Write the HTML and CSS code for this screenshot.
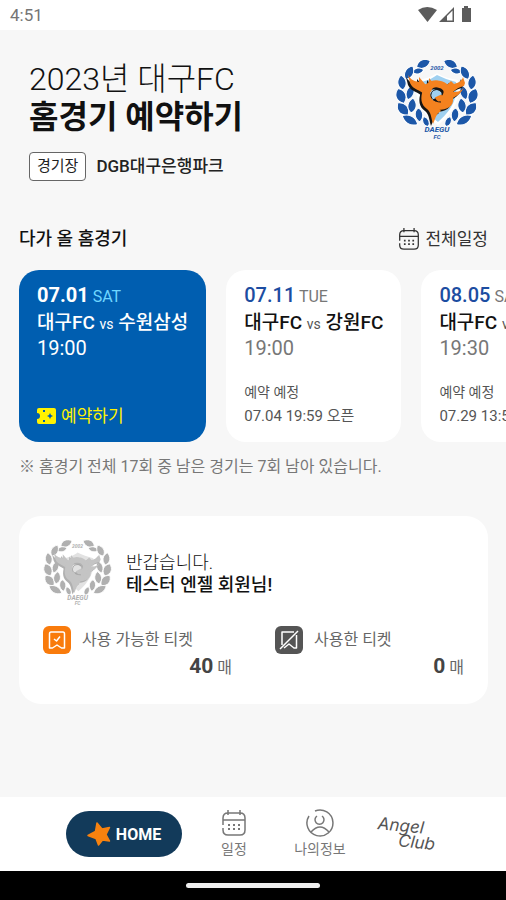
FILE: index.html
```html
<!DOCTYPE html>
<html lang="ko">
<head>
    <meta charset="UTF-8">
    <meta name="viewport" content="width=device-width, initial-scale=1">
    <title>대구FC 홈경기 예약하기</title>
    <link rel="stylesheet" href="styles.css">
</head>
<body>

<!-- 공용 아이콘 -->
<svg class="defs" width="0" height="0" aria-hidden="true">
    <g id="wreath" class="leaves">
        <path transform="translate(56 4) rotate(-66)" d="M0 7C-6 3-5-4 0-8C5-4 6 3 0 7Z"/>
        <path transform="translate(61 11) rotate(-78)" d="M0 6C-4 3-4-3 0-6C4-3 4 3 0 6Z"/>
        <path transform="translate(70 13) rotate(-28)" d="M0 7C-6 3-5-4 0-8C5-4 6 3 0 7Z"/>
        <path transform="translate(77 23) rotate(8)" d="M0 7C-6 3-5-4 0-8C5-4 6 3 0 7Z"/>
        <path transform="translate(78 36) rotate(22)" d="M0 8C-7 3-6-4 0-8C6-4 7 3 0 8Z"/>
        <path transform="translate(76 49) rotate(40)" d="M0 8C-7 3-6-4 0-8C6-4 7 3 0 8Z"/>
        <path transform="translate(69 60) rotate(60)" d="M0 9C-6 3-5-4 0-9C5-4 6 3 0 9Z"/>
        <path transform="translate(69 33) rotate(-18)" d="M0 7C-5 3-5-4 0-8C5-4 5 3 0 7Z"/>
        <path transform="translate(67 46) rotate(-8)" d="M0 7C-6 3-5-4 0-8C5-4 6 3 0 7Z"/>
        <path transform="translate(60 55) rotate(6)" d="M0 7C-5 3-5-4 0-7C5-4 5 3 0 7Z"/>
        <path transform="translate(53 62) rotate(24)" d="M0 5C-4 3-4-3 0-6C4-3 4 3 0 5Z"/>
    </g>
    <g id="bird">
        <path stroke="none" d="M13 15C16 20 19 21 24 22L24 17L30 24C33 25 34 24 34 18L39 24L36 32L30 35C26 30 18 30 15 23Z"/>
        <path stroke="none" d="M52 25L56 21L59 24C63 23 67 21 68 17L70 23L69 26C64 27 61 29 58 32C63 32 67 31 69 27C66 34 61 36 58 38C59 46 53 50 42 50L40 42L52 38Z"/>
        <path stroke="none" d="M28 30C25 38 26 45 32 49C36 52 36 57 38 64C41 57 41 54 46 51L38 42L34 30Z"/>
        <path fill="none" stroke-width="7" d="M50 44C42 47 32 44 31 36C30 27 37 23 43 24C51 25 54 31 51 36C49 40 45 40 43 36"/>
    </g>
    <g id="emblem">
        <use href="#wreath"/>
        <use href="#wreath" transform="translate(84 0) scale(-1 1)"/>
        <path class="shield" d="M22 20C30 19 36 17 42 13C48 17 56 19 63 20C67 38 58 54 43 65C28 54 18 40 22 20Z"/>
        <path class="shield-in" d="M26 22C34 20 38 18 42 15C48 18 54 20 61 22C64 38 55 52 43 62C30 51 22 38 26 22Z"/>
        <use class="shade" href="#bird" transform="translate(-2 2)"/>
        <use class="bird" href="#bird"/>
        <path class="swirl" d="M46 42C39 42 35 38 36 34C37 30 42 28 46 31"/>
    </g>
    <symbol id="calendar" viewBox="0 0 26 28">
        <g fill="none" stroke="currentColor" stroke-width="1.5">
            <path d="M2 16V9Q2 4 7 4H19Q24 4 24 9V21Q24 26 19 26H7Q2 26 2 21V19"/>
            <path d="M2 11H24M7 1V6M19 1V6"/>
            <path stroke-width="2" stroke-dasharray="2 3" d="M7 16H20M7 20H20"/>
        </g>
    </symbol>
</svg>

<div class="status-bar">
    <span>4:51</span>
    <svg class="status-icons" width="56" height="18" viewBox="0 0 56 18" aria-hidden="true">
        <path d="M0 4Q9-2 19 4L9.500 16Z"/>
        <path fill-rule="evenodd" d="M36 1V16H21ZM34.500 4.500L29 10V14.500H34.500Z"/>
        <path d="M44 2H46V0H50V2H53V16H44Z"/>
    </svg>
</div>

<header class="header">
    <div>
        <h1>2023년 대구FC<strong>홈경기 예약하기</strong></h1>
        <p class="stadium"><span class="tag">경기장</span>DGB대구은행파크</p>
    </div>
    <svg class="emblem" width="85" height="82" viewBox="0 0 85 82" role="img" aria-label="대구FC">
        <use href="#emblem"/>
        <text class="year" x="42" y="10" text-anchor="middle">2002</text>
        <text class="club" x="42" y="72" text-anchor="middle">DAEGU</text>
        <text class="year" x="42" y="79" text-anchor="middle">FC</text>
    </svg>
</header>

<main>
    <div class="section-head">
        <h2>다가 올 홈경기</h2>
        <a href="#schedule"><svg width="22" height="24" aria-hidden="true"><use href="#calendar"/></svg>전체일정</a>
    </div>

    <div class="matches">
        <article class="match active">
            <p class="date"><b>07.01</b> SAT</p>
            <h3>대구FC <small>vs</small> 수원삼성</h3>
            <p class="time">19:00</p>
            <a class="reserve" href="#reserve">
                <svg width="19" height="16" viewBox="0 0 19 16" aria-hidden="true">
                    <path fill="currentColor" fill-rule="evenodd" d="M2 0H17Q19 0 19 2V14Q19 16 17 16H2Q0 16 0 14V11Q3 11 3 8Q3 5 0 5V2Q0 0 2 0ZM13 5L12 7L10 8L12 9L13 11L14 9L16 8L14 7ZM6 2V4H8V2ZM6 12V14H8V12Z"/>
                </svg>예약하기</a>
        </article>
        <article class="match">
            <p class="date"><b>07.11</b> TUE</p>
            <h3>대구FC <small>vs</small> 강원FC</h3>
            <p class="time">19:00</p>
            <p class="open">예약 예정<span>07.04 19:59 오픈</span></p>
        </article>
        <article class="match">
            <p class="date"><b>08.05</b> SAT</p>
            <h3>대구FC <small>vs</small> 수원삼성</h3>
            <p class="time">19:30</p>
            <p class="open">예약 예정<span>07.29 13:59 오픈</span></p>
        </article>
    </div>
    <p class="note">※ 홈경기 전체 17회 중 남은 경기는 7회 남아 있습니다.</p>

    <section class="member">
        <div class="hello">
            <svg class="emblem gray" width="70" height="68" viewBox="0 0 85 82" aria-hidden="true">
                <use href="#emblem"/>
                <text class="year" x="42" y="10" text-anchor="middle">2002</text>
                <text class="club" x="42" y="72" text-anchor="middle">DAEGU</text>
                <text class="year" x="42" y="79" text-anchor="middle">FC</text>
            </svg>
            <p>반갑습니다.<strong>테스터 엔젤 회원님!</strong></p>
        </div>
        <div class="tickets">
            <div class="ticket">
                <p class="label">
                    <svg width="28" height="28" viewBox="0 0 28 28" aria-hidden="true">
                        <rect width="28" height="28" rx="6" fill="#f97b0c"/>
                        <path fill="none" stroke="#fff" stroke-width="1.500" stroke-linejoin="round" d="M8 6H20Q21.500 6 21.500 8V22H18.500L14 19L9.500 22H6.500V8Q6.500 6 8 6ZM11 13L13.500 15L17 10.500"/>
                    </svg>사용 가능한 티켓</p>
                <p class="count"><b>40</b> 매</p>
            </div>
            <div class="ticket">
                <p class="label">
                    <svg width="28" height="28" viewBox="0 0 28 28" aria-hidden="true">
                        <rect width="28" height="28" rx="6" fill="#555"/>
                        <path fill="none" stroke="#fff" stroke-width="1.500" stroke-linejoin="round" d="M19 6H7V19M5 23L23 5M21.500 9V22H19L14 18L9 22"/>
                    </svg>사용한 티켓</p>
                <p class="count"><b>0</b> 매</p>
            </div>
        </div>
    </section>
</main>

<nav class="tab-bar">
    <a class="home" href="#home">
        <svg width="24" height="24" viewBox="0 0 24 24" aria-hidden="true">
            <path fill="#f7820f" stroke="#f7820f" stroke-width="1.500" stroke-linejoin="round" d="M10 1L15 7L22.500 5.500L19 12.500L22.500 19L15.500 18L11.500 23L9 16.500L1 13.500L8.500 9.500Z"/>
        </svg>HOME</a>
    <a class="tab" href="#schedule"><svg width="26" height="28" aria-hidden="true"><use href="#calendar"/></svg>일정</a>
    <a class="tab" href="#me">
        <svg width="28" height="28" viewBox="0 0 28 28" aria-hidden="true">
            <g fill="none" stroke="currentColor" stroke-width="1.500">
                <path d="M9 2A13 13 0 1 1 3 7"/>
                <path d="M11 7A4.500 4.500 0 1 0 16 7M5 23Q14 13 23 23"/>
            </g>
        </svg>나의정보</a>
    <a class="tab angel" href="#angel"><span>Angel</span><span>Club</span></a>
</nav>
<div class="gesture-bar"></div>

</body>
</html>
```
FILE: styles.css
```css
* {
    box-sizing: border-box;
}
body {
    display: flex;
    flex-direction: column;
    min-height: 100vh;
    margin: 0;
    overflow-x: hidden;
    background-color: #f7f7f7;
    color: #111;
    font-family: Roboto, "Noto Sans CJK KR", sans-serif;
}
h1, h2, h3, p {
    margin: 0;
}
a {
    color: inherit;
    text-decoration: none;
}
.defs {
    position: absolute;
}

.status-bar {
    display: flex;
    justify-content: space-between;
    align-items: center;
    height: 30px;
    padding: 0 32px 0 10px;
    background-color: #fff;
    color: #757575;
    font-size: 17px;
}
.status-icons {
    fill: #5c5c5c;
}

.header {
    display: flex;
    justify-content: space-between;
    align-items: flex-start;
    padding: 30px 26px 0 29px;
}
h1 {
    font-size: 32px;
    font-weight: 300;
    line-height: 38px;
}
h1 strong {
    display: block;
    font-weight: 700;
}
.stadium {
    display: flex;
    align-items: center;
    gap: 10px;
    margin-top: 16px;
    color: #222;
    font-size: 17px;
    font-weight: 500;
    line-height: 27px;
}
.tag {
    padding: 0 7px;
    border: 1px solid #666;
    border-radius: 4px;
    background-color: #fff;
    font-size: 15px;
    font-weight: 400;
}

/* 엠블럼 */
.emblem {
    --leaf: #1c57a8;
    --sky: #9fd0f0;
    --bird: #f4821f;
    --shade: #151515;
    --swirl: #151515;
    flex: none;
}
.emblem.gray {
    --leaf: #b0b0b0;
    --sky: #e2e2e2;
    --bird: #c4c4c4;
    --shade: #b0b0b0;
    --swirl: #a0a0a0;
}
.leaves {
    fill: var(--leaf);
    stroke: #fff;
    stroke-width: 1px;
}
.shield {
    fill: #fff;
}
.shield-in {
    fill: var(--sky);
}
.shade {
    fill: var(--shade);
    stroke: var(--shade);
}
.bird {
    fill: var(--bird);
    stroke: var(--bird);
}
.swirl {
    fill: none;
    stroke: var(--swirl);
    stroke-width: 1px;
}
.year, .club {
    fill: var(--leaf);
    font-size: 6px;
    font-style: italic;
    font-weight: 700;
}
.club {
    font-size: 8px;
}

.section-head {
    display: flex;
    justify-content: space-between;
    align-items: center;
    padding: 44px 18px 0 19px;
}
h2 {
    font-size: 18px;
    font-weight: 500;
    line-height: 28px;
}
.section-head a {
    display: flex;
    align-items: center;
    gap: 5px;
    color: #333;
    font-size: 17px;
    line-height: 28px;
}

.matches {
    display: flex;
    gap: 20px;
    margin-top: 17px;
    padding-left: 19px;
    overflow: hidden;
}
.match {
    display: flex;
    flex: none;
    flex-direction: column;
    height: 172px;
    padding: 12px 18px 14px;
    border-radius: 20px;
    background-color: #fff;
    line-height: 26px;
    white-space: nowrap;
}
.date {
    color: #777;
    font-size: 16px;
}
.date b {
    color: #1c4da1;
    font-size: 20px;
    font-weight: 500;
}
.match h3 {
    font-size: 19px;
    font-weight: 500;
}
.match small {
    color: #555;
    font-size: 14px;
    font-weight: 400;
}
.time {
    color: #777;
    font-size: 20px;
    line-height: 22px;
}
.open {
    margin-top: auto;
    color: #555;
    font-size: 14px;
    line-height: 24px;
}
.open span {
    display: block;
    font-size: 15px;
}
.reserve {
    display: flex;
    align-items: center;
    gap: 5px;
    margin-top: auto;
    color: #fff200;
    font-size: 17px;
    line-height: 24px;
}
.active {
    background-color: #005eb0;
    color: #fff;
}
.active .date {
    color: #6fd6ff;
}
.active .date b, .active small, .active .time {
    color: #fff;
}
.active .date b {
    font-weight: 700;
}
.note {
    margin: 13px 19px 0;
    color: #777;
    font-size: 16px;
    line-height: 24px;
}

.member {
    margin: 37px 18px 24px 19px;
    padding: 24px;
    border-radius: 22px;
    background-color: #fff;
}
.hello {
    display: flex;
    align-items: center;
    gap: 13px;
    font-size: 18px;
    font-weight: 300;
    line-height: 22px;
}
.hello strong {
    display: block;
    font-weight: 500;
}
.tickets {
    display: grid;
    grid-template-columns: 1fr 1fr;
    gap: 43px;
    margin-top: 18px;
    color: #666;
    font-size: 16px;
}
.label {
    display: flex;
    align-items: center;
    gap: 11px;
    line-height: 28px;
    white-space: nowrap;
}
.count {
    line-height: 24px;
    text-align: right;
}
.count b {
    color: #444;
    font-size: 21px;
}

.tab-bar {
    display: flex;
    justify-content: center;
    align-items: center;
    gap: 18px;
    height: 74px;
    margin-top: auto;
    background-color: #fff;
    color: #777;
}
.home {
    display: flex;
    justify-content: center;
    align-items: center;
    gap: 5px;
    width: 116px;
    height: 46px;
    border-radius: 23px;
    background-color: #123a5a;
    color: #fff;
    font-size: 16px;
    font-weight: 700;
}
.tab {
    display: flex;
    flex-direction: column;
    align-items: center;
    gap: 2px;
    width: 68px;
    font-size: 14px;
    line-height: 20px;
}
.angel {
    gap: 0;
    color: #555;
    font-family: Inter, sans-serif;
    font-size: 17px;
    font-style: italic;
    line-height: 15px;
    transform: rotate(6deg);
}
.angel span:first-child {
    align-self: flex-start;
    padding-left: 5px;
}
.angel span:last-child {
    align-self: flex-end;
    padding-right: 4px;
}
.gesture-bar {
    display: flex;
    justify-content: center;
    align-items: center;
    height: 29px;
    background-color: #000;
}
.gesture-bar::after {
    content: '';
    width: 134px;
    height: 5px;
    border-radius: 3px;
    background-color: #eee;
}
```
